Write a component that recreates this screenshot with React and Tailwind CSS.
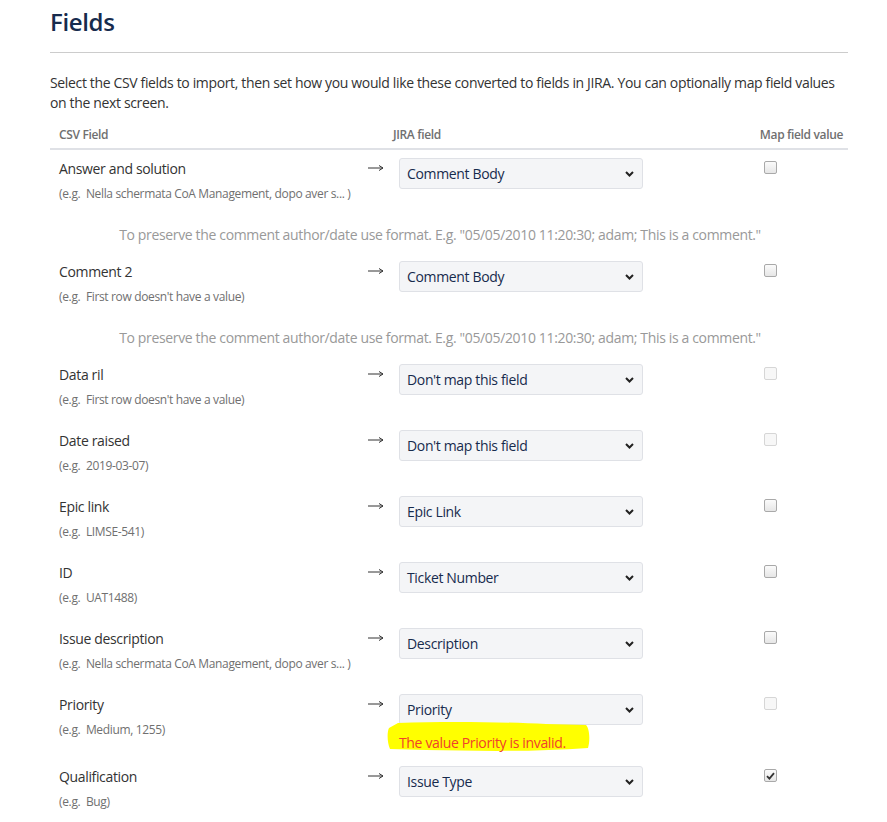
import React from 'react';

const rows = [
  {label: 'Answer and solution', example: 'Nella schermata CoA Management, dopo aver s... )', value: 'Comment Body', note: true, noParen: true},
  {label: 'Comment 2', example: "First row doesn't have a value", value: 'Comment Body', note: true},
  {label: 'Data ril', example: "First row doesn't have a value", value: "Don't map this field", disabled: true},
  {label: 'Date raised', example: '2019-03-07', value: "Don't map this field", disabled: true},
  {label: 'Epic link', example: 'LIMSE-541', value: 'Epic Link'},
  {label: 'ID', example: 'UAT1488', value: 'Ticket Number'},
  {label: 'Issue description', example: 'Nella schermata CoA Management, dopo aver s... )', value: 'Description', noParen: true},
  {label: 'Priority', example: 'Medium, 1255', value: 'Priority', disabled: true, error: 'The value Priority is invalid.'},
  {label: 'Qualification', example: 'Bug', value: 'Issue Type', checked: true},
];

function Checkbox({disabled, checked}) {
  return (
    <span
      className={
        'flex h-[13px] w-[13px] items-center justify-center rounded-[2px] border ' +
        (disabled ? 'border-[#d6d6d6] bg-[#f7f7f7]' : 'border-[#a9a9a9] bg-gradient-to-b from-[#fbfbfb] to-[#e6e6e6]')
      }
    >
      {checked && (
        <svg width="9" height="8" viewBox="0 0 9 8">
          <path d="M1 4.2 L3.4 6.6 L8 1.2" fill="none" stroke="#333" strokeWidth="1.8" />
        </svg>
      )}
    </span>
  );
}

function SelectBox({value}) {
  return (
    <div className="flex h-[31px] w-[244px] items-center justify-between rounded-[3px] border border-[#dfe1e6] bg-[#f4f5f7] pl-[7px] pr-[8px] text-[14px] text-[#172b4d]">
      <span>{value}</span>
      <svg width="9" height="6" viewBox="0 0 9 6">
        <path d="M1 1 L4.5 4.5 L8 1" fill="none" stroke="#222" strokeWidth="2" />
      </svg>
    </div>
  );
}

function Arrow() {
  return (
    <svg width="16" height="8" viewBox="0 0 16 8" className="mt-[6px]">
      <path d="M0 4 H15" stroke="#333" strokeWidth="1" />
      <path d="M11 1.5 L15 4 L11 6.5" fill="none" stroke="#333" strokeWidth="1" />
    </svg>
  );
}

function FieldRow({row}) {
  return (
    <>
      <div className={'flex pt-[8px] ' + (row.error ? 'pb-[8px]' : 'h-[66px]')}>
        <div className="w-[309px] pl-[9px]">
          <div className="pt-[1px] text-[14px] leading-[20px] text-[#333]">{row.label}</div>
          <div className="mt-[6px] whitespace-nowrap text-[12px] leading-[18px] text-[#707070]">
            (e.g.&nbsp; {row.example}{row.noParen ? '' : ')'}
          </div>
        </div>
        <div className="w-[40px] pl-[9px]">
          <Arrow />
        </div>
        <div className="w-[358px]">
          <SelectBox value={row.value} />
          {row.error && (
            <div className="relative mt-[5px] h-[20px] w-[244px]">
              <svg className="absolute left-[-13px] top-[-10px]" width="206" height="34" viewBox="0 0 206 34">
                <path
                  d="M12 3 C60 1 120 2 160 4 L200 5 C204 9 204 22 202 28 C150 32 90 31 40 30 L4 29 C1 22 1 12 3 8 Z"
                  fill="#ffff00"
                />
              </svg>
              <span className="relative text-[14px] leading-[20px] text-[#f0412c]">{row.error}</span>
            </div>
          )}
        </div>
        <div className="pl-[7px] pt-[3px]">
          <Checkbox disabled={row.disabled} checked={row.checked} />
        </div>
      </div>
      {row.note && (
        <div className="flex h-[37px] w-[780px] items-center justify-center text-[14px] text-[#999]">
          To preserve the comment author/date use format. E.g. "05/05/2010 11:20:30; adam; This is a comment."
        </div>
      )}
    </>
  );
}

export default function App() {
  return (
    <div className="min-h-[822px] bg-white pl-[50px] pt-[5px] font-['Open_Sans',sans-serif] tracking-[-0.35px]">
      <div className="w-[798px]">
        <h1 className="text-[24px] font-semibold leading-[34px] text-[#172b4d]">Fields</h1>
        <div className="mt-[13px] border-t border-[#cccccc]" />
        <p className="mt-[20px] text-[14px] leading-[20px] text-[#333]">
          Select the CSV fields to import, then set how you would like these converted to fields in JIRA. You can optionally map field values on the next screen.
        </p>
        <div className="mt-[13px] flex h-[24px] items-center border-b-2 border-[#dfe1e6] pb-[4px] text-[12px] font-semibold text-[#707070]">
          <div className="w-[343px] pl-[9px]">CSV Field</div>
          <div className="flex-1">JIRA field</div>
          <div className="pr-[5px]">Map field value</div>
        </div>
        {rows.map((row) => (
          <FieldRow key={row.label} row={row} />
        ))}
      </div>
    </div>
  );
}
